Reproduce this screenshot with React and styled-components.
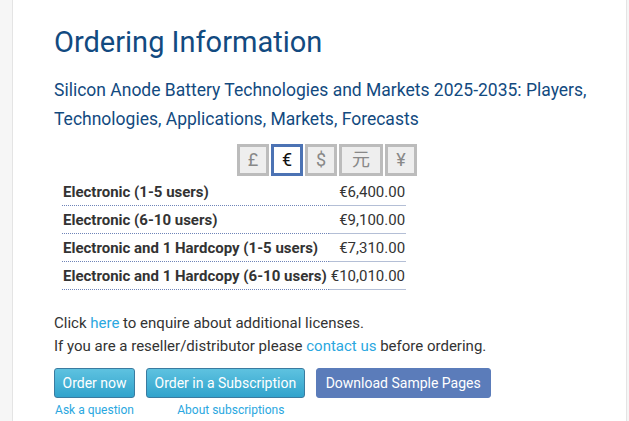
import React, { useState } from 'react';
import styled, { createGlobalStyle } from 'styled-components';

const GlobalStyle = createGlobalStyle`
  body {
    margin: 0;
    background: #f6f6f6;
    font-family: Roboto, "Liberation Sans", Arial, sans-serif;
    color: #333;
  }
`;

const blue = '#124a80';
const link = '#2aa7e0';

const Page = styled.div`
  margin-left: 12px;
  width: 615px;
  min-height: 421px;
  box-sizing: border-box;
  background: #fff;
  border-left: 1px solid #e4e4e4;
  border-right: 1px solid #e4e4e4;
  padding: 22px 20px 0 41px;
`;

const Heading = styled.h1`
  margin: 0;
  font-size: 29px;
  font-weight: 400;
  line-height: 40px;
  color: ${blue};
`;

const SubHeading = styled.h2`
  margin: 14px 0 0;
  font-size: 17.5px;
  font-weight: 400;
  line-height: 29px;
  color: ${blue};
`;

const PriceBlock = styled.div`
  display: inline-flex;
  flex-direction: column;
  margin-top: 10px;
`;

const Currencies = styled.div`
  display: flex;
  justify-content: flex-end;
  gap: 2px;
`;

const CurrencyButton = styled.button`
  height: 32px;
  min-width: 32px;
  padding: 0 ${p => (p.$wide ? 10 : 6)}px;
  box-sizing: border-box;
  border: 3px solid ${p => (p.$active ? '#4c73b4' : '#bcbcbc')};
  background: ${p => (p.$active ? '#fff' : '#eeeeee')};
  color: ${p => (p.$active ? '#111' : '#888')};
  font-family: Roboto, "Noto Sans CJK SC", sans-serif;
  font-size: 18px;
  line-height: 1;
  cursor: pointer;
`;

const Table = styled.table`
  border-collapse: collapse;
  margin: 2px 11px 0 8px;
`;

const Cell = styled.td`
  height: 27px;
  padding: ${p => (p.$price ? '0 1px 0 2px' : '0 2px 0 1px')};
  font-size: 15px;
  border-bottom: 1px ${p => (p.$price ? 'solid #b4bfd6' : 'dotted #6f84b8')};
  font-weight: ${p => (p.$price ? 400 : 700)};
  text-align: ${p => (p.$price ? 'right' : 'left')};
  white-space: nowrap;
  color: #333;
`;

const Notes = styled.div`
  margin-top: 22px;
  font-size: 15px;
  line-height: 23px;
`;

const A = styled.a`
  color: ${link};
  text-decoration: none;
`;

const Actions = styled.div`
  display: flex;
  gap: 11px;
  margin-top: 10px;
  align-items: flex-start;
`;

const Action = styled.div`
  display: flex;
  flex-direction: column;
  align-items: center;
`;

const Button = styled.button`
  height: 30px;
  padding: 0 ${p => (p.$plain ? 9 : 7.5)}px;
  border-radius: 3px;
  font-family: inherit;
  font-size: 14px;
  color: #fff;
  cursor: pointer;
  border: 1px solid ${p => (p.$plain ? '#5b7cba' : '#3a7ba0')};
  background: ${p => (p.$plain ? '#5b7cba' : 'linear-gradient(#5ec2e0, #31a3cc)')};
`;

const SmallLink = styled(A)`
  font-size: 12px;
  line-height: 16px;
  margin-top: 4px;
  padding-left: ${p => p.$indent || 0}px;
`;

const symbols = [
  { s: '£', k: 'gbp' },
  { s: '€', k: 'eur' },
  { s: '$', k: 'usd' },
  { s: '元', k: 'cny', wide: true },
  { s: '¥', k: 'jpy' },
];

const prices = [
  ['Electronic (1-5 users)', '€6,400.00'],
  ['Electronic (6-10 users)', '€9,100.00'],
  ['Electronic and 1 Hardcopy (1-5 users)', '€7,310.00'],
  ['Electronic and 1 Hardcopy (6-10 users)', '€10,010.00'],
];

export default function App() {
  const [cur, setCur] = useState('eur');
  return (
    <>
      <GlobalStyle />
      <Page>
        <Heading>Ordering Information</Heading>
        <SubHeading>
          Silicon Anode Battery Technologies and Markets 2025-2035: Players, Technologies, Applications, Markets, Forecasts
        </SubHeading>
        <PriceBlock>
          <Currencies>
            {symbols.map(c => (
              <CurrencyButton key={c.k} $wide={c.wide} $active={cur === c.k} onClick={() => setCur(c.k)}>
                {c.s}
              </CurrencyButton>
            ))}
          </Currencies>
          <Table>
            <tbody>
              {prices.map(([name, price]) => (
                <tr key={name}>
                  <Cell>{name}</Cell>
                  <Cell $price>{price}</Cell>
                </tr>
              ))}
            </tbody>
          </Table>
        </PriceBlock>
        <Notes>
          Click <A href="#">here</A> to enquire about additional licenses.
          <br />
          If you are a reseller/distributor please <A href="#">contact us</A> before ordering.
        </Notes>
        <Actions>
          <Action>
            <Button>Order now</Button>
            <SmallLink href="#">Ask a question</SmallLink>
          </Action>
          <Action>
            <Button>Order in a Subscription</Button>
            <SmallLink href="#" $indent={11}>About subscriptions</SmallLink>
          </Action>
          <Action>
            <Button $plain>Download Sample Pages</Button>
          </Action>
        </Actions>
      </Page>
    </>
  );
}
